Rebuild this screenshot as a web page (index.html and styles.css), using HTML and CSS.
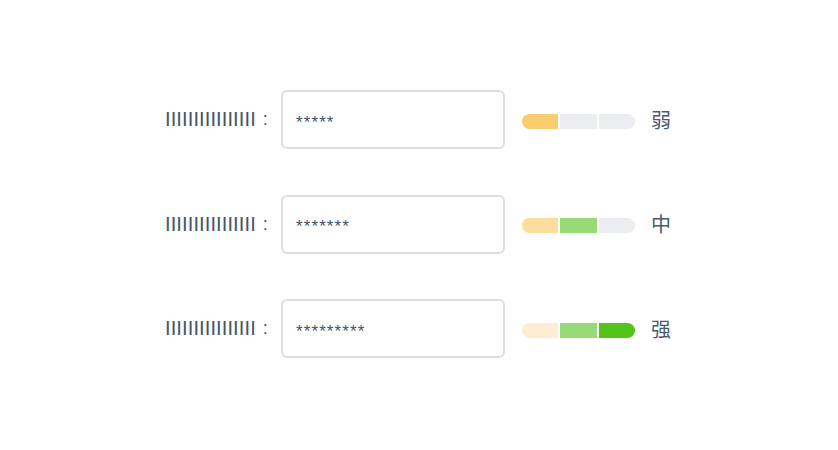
FILE: index.html
```html
<!DOCTYPE html>
<html lang="zh">
<head>
<meta charset="utf-8">
<title>Password strength</title>
<link rel="stylesheet" href="styles.css">
</head>
<body>
<div class="page">
  <div class="form">
    <div class="row">
      <label class="label"><span class="label-text">IIIIIIIIIIIIIIII</span><span class="colon">:</span></label>
      <div class="input"><span class="value">*****</span></div>
      <div class="meter">
        <span class="seg seg-weak"></span>
        <span class="seg seg-empty"></span>
        <span class="seg seg-empty"></span>
      </div>
      <span class="level">弱</span>
    </div>
    <div class="row">
      <label class="label"><span class="label-text">IIIIIIIIIIIIIIII</span><span class="colon">:</span></label>
      <div class="input"><span class="value">*******</span></div>
      <div class="meter">
        <span class="seg seg-weak-light"></span>
        <span class="seg seg-mid"></span>
        <span class="seg seg-empty"></span>
      </div>
      <span class="level">中</span>
    </div>
    <div class="row">
      <label class="label"><span class="label-text">IIIIIIIIIIIIIIII</span><span class="colon">:</span></label>
      <div class="input"><span class="value">*********</span></div>
      <div class="meter">
        <span class="seg seg-weak-pale"></span>
        <span class="seg seg-mid"></span>
        <span class="seg seg-strong"></span>
      </div>
      <span class="level">强</span>
    </div>
  </div>
</div>
</body>
</html>
```
FILE: styles.css
```css
html, body {
  margin: 0;
  padding: 0;
  background: #ffffff;
}
body {
  font-family: "Liberation Sans", "Noto Sans CJK SC", sans-serif;
  color: #4a596c;
}
.page {
  width: 838px;
  height: 450px;
  display: flex;
  align-items: center;
  justify-content: center;
}
.form {
  display: flex;
  flex-direction: column;
  gap: 46.5px;
  padding-right: 2px;
  padding-bottom: 2px;
}
.row {
  display: flex;
  align-items: center;
  height: 58px;
}
.label {
  display: flex;
  align-items: center;
  width: 116px;
  font-size: 20px;
  line-height: 22px;
  margin-top: -1px;
  color: #45556a;
}
.label-text {
  letter-spacing: 0.12px;
}
.colon {
  margin-left: 7px;
  font-size: 18px;
}
.input {
  box-sizing: border-box;
  width: 224px;
  height: 59px;
  border: 2px solid #dcdee2;
  border-radius: 6px;
  display: flex;
  align-items: center;
  padding-left: 13px;
}
.value {
  font-size: 17px;
  letter-spacing: 1.1px;
  color: #44546a;
  margin-top: 6px;
}
.meter {
  display: flex;
  gap: 2px;
  margin-left: 17px;
  width: 113px;
  height: 15px;
  margin-top: 3px;
}
.seg {
  flex: 1;
  background: #ebedf1;
}
.seg:first-child {
  border-radius: 8px 0 0 8px;
}
.seg:last-child {
  border-radius: 0 8px 8px 0;
}
.seg-weak { background: #f9cd6f; }
.seg-weak-light { background: #fcdd9f; }
.seg-weak-pale { background: #feedd4; }
.seg-mid { background: #98da77; }
.seg-strong { background: #52c41a; }
.seg-empty { background: #ebedf1; }
.level {
  margin-left: 16px;
  font-family: "Noto Sans CJK SC", sans-serif;
  font-size: 20px;
  line-height: 24px;
  color: #4a596c;
  margin-top: 0;
}
```
